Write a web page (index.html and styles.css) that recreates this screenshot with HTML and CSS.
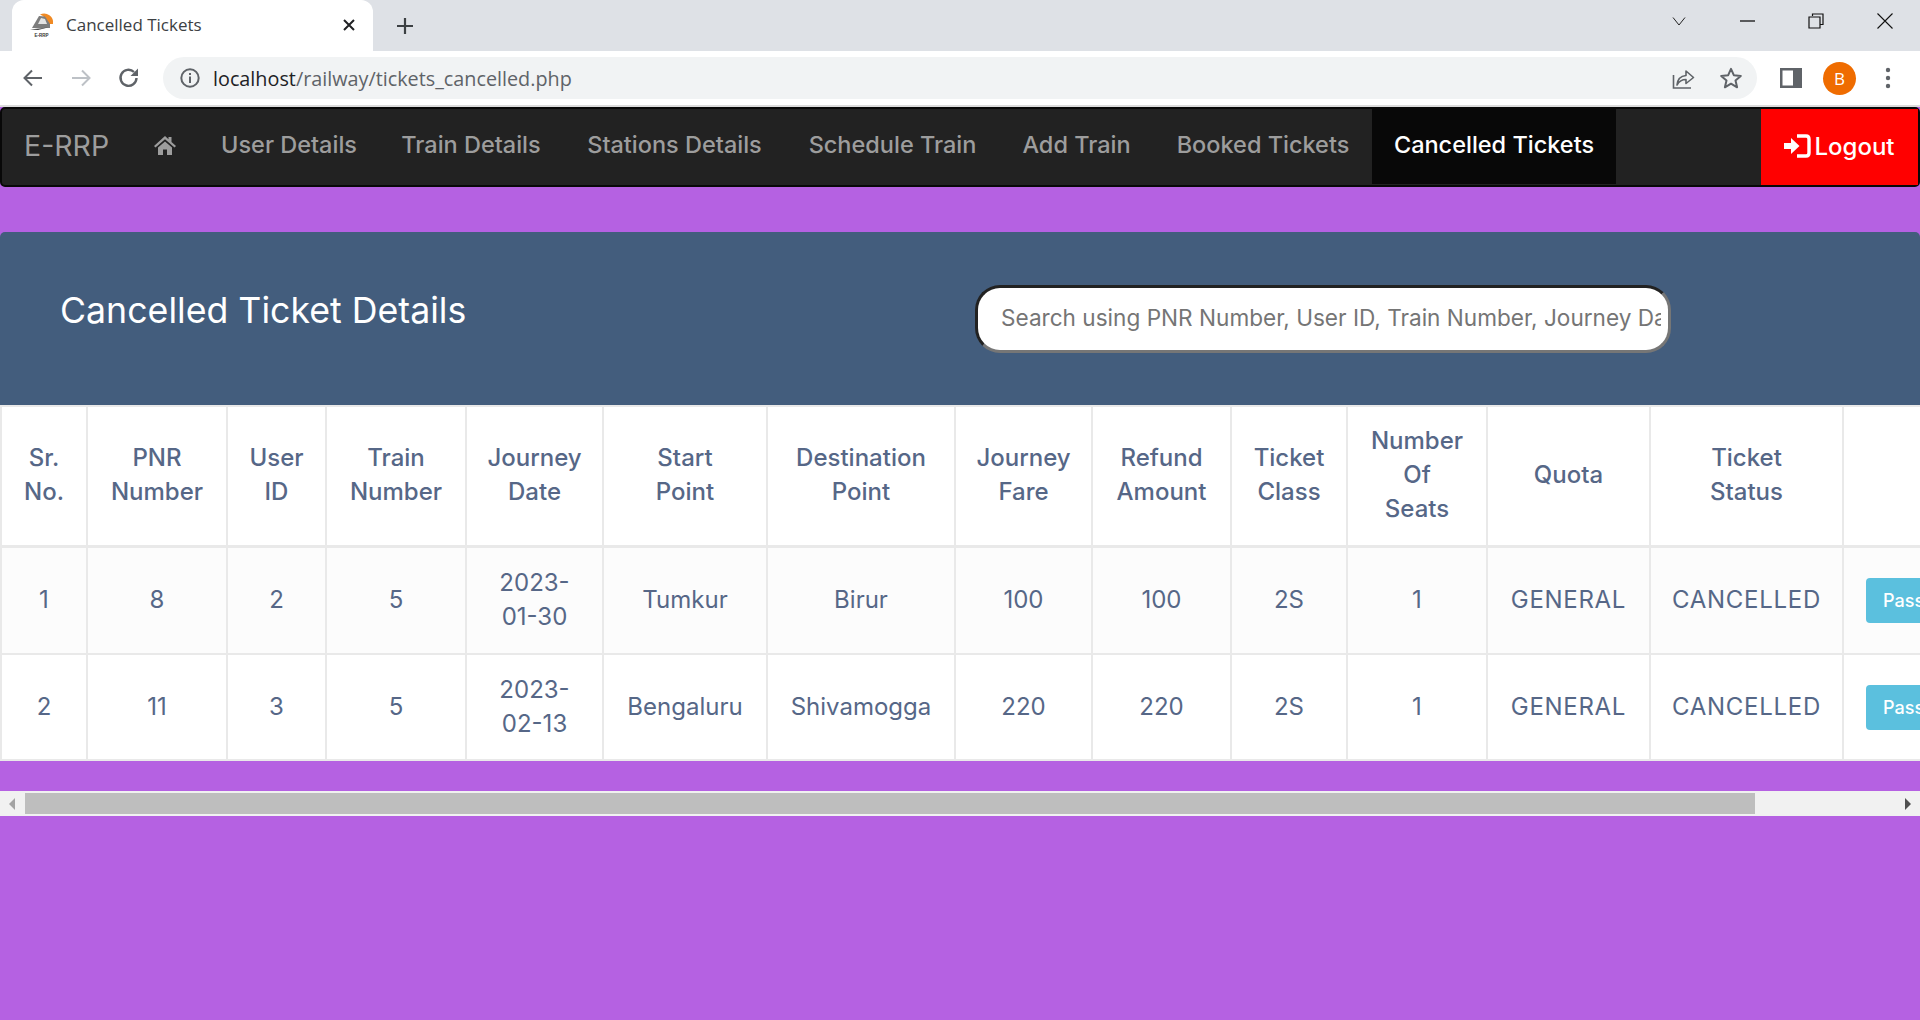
FILE: index.html
```html
<!DOCTYPE html>
<html lang="en">
<head>
<meta charset="UTF-8">
<meta name="viewport" content="width=device-width, initial-scale=1.0">
<title>Cancelled Tickets</title>
<link rel="stylesheet" href="styles.css">
</head>
<body>

<!-- browser window top -->
<div class="tabstrip">
  <div class="tab">
    <svg class="favicon" width="24" height="28" viewBox="0 0 24 28">
      <path d="M10 3.5 A9 9 0 0 1 23 13 L19 13 L13 5 Z" fill="#f08a24"/>
      <path d="M2 17 L9 5 L15 5.5 L20 13 L20 17 Z" fill="#7d7d7d"/>
      <path d="M8 13 L11 7 L15 8 L17 13 Z" fill="#e4e4e4"/>
      <path d="M0 18.5 L18 16.5 L8 19 Z" fill="#444"/>
      <text class="favicon-text" x="4.5" y="26">E-RRP</text>
    </svg>
    <span class="tab-title">Cancelled Tickets</span>
    <svg class="tab-close" width="14" height="14" viewBox="0 0 14 14">
      <path d="M2 2 L12 12 M12 2 L2 12" stroke="#202124" stroke-width="2"/>
    </svg>
  </div>
  <svg class="new-tab" width="20" height="20" viewBox="0 0 20 20">
    <path d="M10 2 V18 M2 10 H18" stroke="#3c4043" stroke-width="2.2"/>
  </svg>
  <div class="window-controls">
    <svg width="16" height="16" viewBox="0 0 16 16"><path d="M2 4.5 L8 12 L14 4.5" fill="none" stroke="#222" stroke-width="1"/></svg>
    <svg width="16" height="16" viewBox="0 0 16 16"><path d="M0 8 H15" stroke="#111" stroke-width="1.3"/></svg>
    <svg width="16" height="16" viewBox="0 0 16 16"><path d="M4.5 3 V1 H15 V11.5 H12.5 M1 4 H12 V15 H1 Z" fill="none" stroke="#111" stroke-width="1.2"/></svg>
    <svg width="16" height="16" viewBox="0 0 16 16"><path d="M0.5 0.5 L15.5 15.5 M15.5 0.5 L0.5 15.5" stroke="#111" stroke-width="1.1"/></svg>
  </div>
</div>

<div class="toolbar">
  <svg class="tool-btn" width="24" height="24" viewBox="0 0 24 24"><path d="M21 12 H4 M11 4.5 L3.5 12 L11 19.5" fill="none" stroke="#5f6368" stroke-width="2"/></svg>
  <svg class="tool-btn" width="24" height="24" viewBox="0 0 24 24"><path d="M3 12 H20 M13 4.5 L20.5 12 L13 19.5" fill="none" stroke="#bdc1c6" stroke-width="2"/></svg>
  <svg class="tool-btn" width="24" height="24" viewBox="0 0 24 24"><path d="M19.5 12 A8 8 0 1 1 17 6" fill="none" stroke="#5f6368" stroke-width="2.4"/><path d="M21 2.5 V10 H13.5 Z" fill="#5f6368"/></svg>
  <div class="omnibox">
    <svg width="22" height="22" viewBox="0 0 22 22"><circle cx="11" cy="11" r="8.7" fill="none" stroke="#5f6368" stroke-width="2"/><rect x="10" y="9.5" width="2" height="6.5" fill="#5f6368"/><rect x="10" y="6" width="2" height="2" fill="#5f6368"/></svg>
    <span class="url"><span class="url-host">localhost</span>/railway/tickets_cancelled.php</span>
    <svg class="omni-share" width="24" height="24" viewBox="0 0 24 24"><path d="M2.5 9 V22 H20" fill="none" stroke="#5f6368" stroke-width="1.6"/><path d="M6 19 C6.5 13 10 10 15 9.5 V5 L22.5 11.5 L15 17.5 V13.5 C11 13.5 8 15.5 6 19 Z" fill="none" stroke="#5f6368" stroke-width="1.6" stroke-linejoin="round"/></svg>
    <svg class="omni-star" width="24" height="24" viewBox="0 0 24 24"><path d="M12 2.8 L14.8 9.2 L21.8 9.9 L16.5 14.5 L18.1 21.3 L12 17.7 L5.9 21.3 L7.5 14.5 L2.2 9.9 L9.2 9.2 Z" fill="none" stroke="#5f6368" stroke-width="2" stroke-linejoin="round"/></svg>
  </div>
  <svg class="side-panel" width="22" height="20" viewBox="0 0 22 20"><rect width="22" height="20" fill="#5f6368"/><rect x="2.5" y="2.5" width="10.5" height="15" fill="#fff"/></svg>
  <div class="avatar">B</div>
  <svg class="menu-dots" width="6" height="24" viewBox="0 0 6 24"><circle cx="3" cy="4" r="2.2" fill="#5f6368"/><circle cx="3" cy="12" r="2.2" fill="#5f6368"/><circle cx="3" cy="20" r="2.2" fill="#5f6368"/></svg>
</div>

<!-- page -->
<nav class="navbar">
  <a class="brand">E-RRP</a>
  <a class="nav-link nav-home">
    <svg width="22" height="19" viewBox="0 0 22 19"><path d="M11 0 L14.5 3.2 V1 H17.5 V6 L22 10 L20.5 11.5 L11 3.2 L1.5 11.5 L0 10 Z M4 11.5 L11 5.4 L18 11.5 V19 H13 V13.5 H9 V19 H4 Z" fill="#9d9d9d"/></svg>
  </a>
  <a class="nav-link nav-user">User Details</a>
  <a class="nav-link nav-train">Train Details</a>
  <a class="nav-link nav-stations">Stations Details</a>
  <a class="nav-link nav-schedule">Schedule Train</a>
  <a class="nav-link nav-add">Add Train</a>
  <a class="nav-link nav-booked">Booked Tickets</a>
  <a class="nav-link nav-cancelled active">Cancelled Tickets</a>
  <a class="logout">
    <svg width="27" height="24" viewBox="0 0 27 24"><path d="M0 9 H7 V4 L15.5 12 L7 20 V15 H0 Z" fill="#fff"/><path d="M13 2 H22 Q25 2 25 5 V19 Q25 22 22 22 H13" fill="none" stroke="#fff" stroke-width="3.4"/></svg>
    Logout
  </a>
</nav>

<section class="panel">
  <div class="panel-head">
    <h2 class="panel-title">Cancelled Ticket Details</h2>
    <input class="search" type="text" placeholder="Search using PNR Number, User ID, Train Number, Journey Date">
  </div>
  <div class="table-wrap">
    <table class="tickets">
      <colgroup>
        <col class="c-sr"><col class="c-pnr"><col class="c-user"><col class="c-train">
        <col class="c-date"><col class="c-start"><col class="c-dest"><col class="c-fare">
        <col class="c-refund"><col class="c-class"><col class="c-seats"><col class="c-quota">
        <col class="c-status"><col class="c-action">
      </colgroup>
      <thead>
        <tr>
          <th>Sr.<br>No.</th>
          <th>PNR<br>Number</th>
          <th>User<br>ID</th>
          <th>Train<br>Number</th>
          <th>Journey<br>Date</th>
          <th>Start<br>Point</th>
          <th>Destination<br>Point</th>
          <th>Journey<br>Fare</th>
          <th>Refund<br>Amount</th>
          <th>Ticket<br>Class</th>
          <th>Number<br>Of<br>Seats</th>
          <th>Quota</th>
          <th>Ticket<br>Status</th>
          <th></th>
        </tr>
      </thead>
      <tbody>
        <tr class="odd">
          <td>1</td><td>8</td><td>2</td><td>5</td>
          <td>2023-<br>01-30</td><td>Tumkur</td><td>Birur</td><td>100</td>
          <td>100</td><td>2S</td><td>1</td><td class="caps">GENERAL</td><td class="caps">CANCELLED</td>
          <td class="action"><button class="btn-info">Pass</button></td>
        </tr>
        <tr>
          <td>2</td><td>11</td><td>3</td><td>5</td>
          <td>2023-<br>02-13</td><td>Bengaluru</td><td>Shivamogga</td><td>220</td>
          <td>220</td><td>2S</td><td>1</td><td class="caps">GENERAL</td><td class="caps">CANCELLED</td>
          <td class="action"><button class="btn-info">Pass</button></td>
        </tr>
      </tbody>
    </table>
  </div>
</section>

<div class="hscroll">
  <span class="arrow-left"></span>
  <div class="thumb"></div>
  <span class="arrow-right"></span>
</div>

</body>
</html>
```

FILE: styles.css
```css
* {
  box-sizing: border-box;
}

html,
body {
  margin: 0;
  height: 1020px;
  overflow: hidden;
}

body {
  background: #b561e2;
  font-family: Inter, sans-serif;
}

/* browser top */
.tabstrip {
  height: 51px;
  background: #dee1e6;
  display: flex;
  align-items: flex-end;
  padding-left: 12px;
}

.tab {
  width: 361px;
  height: 51px;
  background: #fff;
  border-radius: 12px 12px 0 0;
  display: flex;
  align-items: center;
  padding: 0 17px 1px 18px;
}

.favicon {
  margin-right: 12px;
}

.favicon-text {
  font-family: "Liberation Sans", sans-serif;
  font-size: 4.5px;
  font-weight: 700;
  fill: #333;
}

.tab-title {
  flex: 1;
  padding-bottom: 2px;
  font-family: "Open Sans", sans-serif;
  font-size: 17px;
  color: #3c4043;
}

.new-tab {
  margin: 0 0 15px 22px;
}

.window-controls {
  margin-left: auto;
  width: 249px;
  height: 42px;
  padding: 0 27px 0 0;
  align-self: flex-start;
  display: flex;
  align-items: center;
  justify-content: space-between;
}

.toolbar {
  height: 56px;
  background: #fff;
  border-bottom: 2px solid #dcdcdc;
  display: flex;
  align-items: center;
  padding: 0 0 0 21px;
}

.tool-btn {
  margin-right: 24px;
}

.omnibox {
  width: 1594px;
  height: 42px;
  margin-left: -2px;
  background: #f1f3f4;
  border-radius: 21px;
  display: flex;
  align-items: center;
  padding: 0 14px 0 16px;
}

.url {
  flex: 1;
  margin-left: 12px;
  font-family: "Open Sans", sans-serif;
  font-size: 19.8px;
  color: #5f6368;
}

.url-host {
  color: #202124;
}

.omni-share {
  margin-right: 24px;
}

.side-panel {
  margin-left: 23px;
}

.avatar {
  width: 33px;
  height: 33px;
  margin-left: 21px;
  border-radius: 50%;
  background: #ef6c00;
  color: #fff;
  font-family: "Open Sans", sans-serif;
  font-size: 17px;
  display: flex;
  align-items: center;
  justify-content: center;
}

.menu-dots {
  margin-left: 29px;
}

/* navbar */
.navbar {
  height: 80px;
  background: #222;
  border: 2px solid #080808;
  border-radius: 5px;
  display: flex;
  align-items: stretch;
  font-size: 23.5px;
}

.brand {
  width: 129px;
  padding: 19px 0 0 22px;
  font-size: 28.5px;
  color: #9d9d9d;
}

.nav-link {
  height: 75px;
  padding-top: 21px;
  text-align: center;
  color: #9d9d9d;
  font-weight: 500;
  white-space: nowrap;
}

.nav-home { width: 68px; padding-top: 23px; }
.nav-user { width: 180px; }
.nav-train { width: 184px; }
.nav-stations { width: 223px; }
.nav-schedule { width: 213px; }
.nav-add { width: 155px; }
.nav-booked { width: 218px; }
.nav-cancelled { width: 244px; }

.active {
  background: #080808;
  color: #fff;
}

.logout {
  width: 157px;
  margin-left: auto;
  padding-bottom: 2px;
  background: #f00;
  color: #fff;
  font-size: 24px;
  font-weight: 500;
  display: flex;
  align-items: center;
  justify-content: center;
  gap: 3px;
}

/* panel */
.panel {
  margin-top: 45px;
}

.panel-head {
  height: 173px;
  background: #435d7d;
  border-radius: 5px 5px 0 0;
  display: flex;
  align-items: flex-start;
  padding: 53px 0 0 60px;
}

.panel-title {
  width: 915px;
  margin: 0;
  color: #fff;
  font-size: 35.7px;
  font-weight: 400;
  line-height: 50px;
}

.search {
  width: 696px;
  height: 68px;
  border: 3px solid;
  border-color: #222 #767676 #767676 #222;
  border-radius: 25px;
  padding: 0 7px 3px 23px;
  font-family: Inter, sans-serif;
  font-size: 22.6px;
  background: #fff;
}

.search::placeholder {
  color: #757575;
  opacity: 1;
}

.table-wrap {
  overflow: hidden;
  background: #fff;
}

.tickets {
  width: 2075px;
  table-layout: fixed;
  border-collapse: collapse;
  color: #566787;
  font-size: 24px;
  line-height: 34px;
  text-align: center;
}

.c-sr { width: 86px; }
.c-pnr { width: 140px; }
.c-user { width: 99px; }
.c-train { width: 140px; }
.c-date { width: 137px; }
.c-start { width: 164px; }
.c-dest { width: 188px; }
.c-fare { width: 137px; }
.c-refund { width: 139px; }
.c-class { width: 116px; }
.c-seats { width: 140px; }
.c-quota { width: 163px; }
.c-status { width: 193px; }
.c-action { width: 233px; }

.tickets th,
.tickets td {
  border: 2px solid #e9e9e9;
  padding: 0;
}

.tickets th {
  height: 140px;
  padding-bottom: 2px;
  border-bottom-width: 3px;
  font-weight: 500;
}

.tickets td {
  height: 106px;
}

.tickets .odd td {
  height: 108px;
  background: #fcfcfc;
}

.tickets .caps {
  letter-spacing: 0.7px;
}

.tickets .action {
  text-align: left;
  padding: 0 0 0 22px;
}

.btn-info {
  width: 200px;
  height: 45px;
  border: 0;
  border-radius: 4px;
  background: #5bc0de;
  color: #fff;
  font-family: Inter, sans-serif;
  font-size: 18px;
  font-weight: 500;
  text-align: left;
  padding: 0 0 0 17px;
}

/* horizontal scrollbar */
.hscroll {
  height: 25px;
  margin-top: 30px;
  background: #f1f1f1;
  display: flex;
  align-items: center;
}

.arrow-left {
  width: 0;
  height: 0;
  margin: 0 10px 0 9px;
  border: 6px solid transparent;
  border-left: 0;
  border-right-color: #a3a3a3;
}

.thumb {
  width: 1730px;
  height: 21px;
  background: #bebebe;
}

.arrow-right {
  width: 0;
  height: 0;
  margin-left: auto;
  margin-right: 9px;
  border: 6px solid transparent;
  border-right: 0;
  border-left-color: #505050;
}
```
